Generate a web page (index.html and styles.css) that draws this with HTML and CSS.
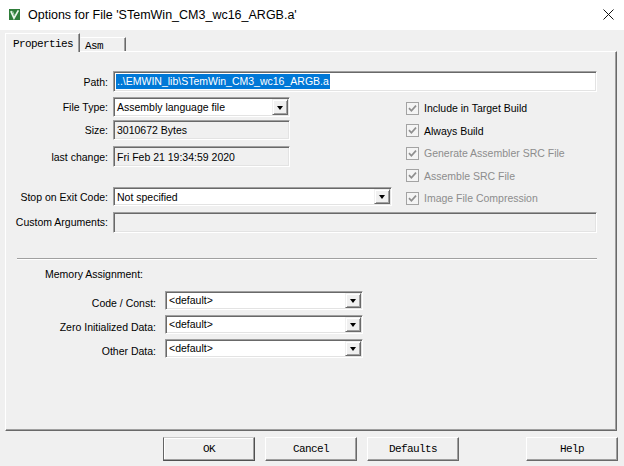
FILE: index.html
```html
<!DOCTYPE html>
<html>
<head>
<meta charset="utf-8">
<title>Options for File</title>
<link rel="stylesheet" href="styles.css">
</head>
<body>
<div class="window">
  <header class="titlebar">
    <svg class="app-icon" width="11" height="11" viewBox="0 0 11 11">
      <rect width="11" height="11" fill="#2f7d3a"/>
      <path d="M1.8 2.2 L5 9.2 L9.4 1.4" fill="none" stroke="#eaf6ea" stroke-width="1.7"/>
      <path d="M3.6 2.2 L5.4 6.4" fill="none" stroke="#9fd3a4" stroke-width="1"/>
    </svg>
    <span class="title">Options for File 'STemWin_CM3_wc16_ARGB.a'</span>
    <svg class="close" width="11" height="11" viewBox="0 0 11 11">
      <path d="M0.5 0.5 L10.5 10.5 M10.5 0.5 L0.5 10.5" stroke="#111" stroke-width="1"/>
    </svg>
  </header>

  <div class="dialog">
    <div class="tabs">
      <div class="tab active">Properties</div>
      <div class="tab">Asm</div>
    </div>

    <section class="panel">
      <div class="row path-row">
        <span class="lbl">Path:</span>
        <div class="edit wide"><span class="selected">..\EMWIN_lib\STemWin_CM3_wc16_ARGB.a</span></div>
      </div>

      <div class="mid">
        <div class="mid-left">
          <div class="row r-type">
            <span class="lbl">File Type:</span>
            <div class="combo w-short"><span class="val">Assembly language file</span><span class="drop"></span></div>
          </div>
          <div class="row r-size">
            <span class="lbl">Size:</span>
            <div class="edit ro w-short"><span class="val">3010672 Bytes</span></div>
          </div>
          <div class="row r-date">
            <span class="lbl">last change:</span>
            <div class="edit ro w-short"><span class="val">Fri Feb 21 19:34:59 2020</span></div>
          </div>
          <div class="row r-stop">
            <span class="lbl">Stop on Exit Code:</span>
            <div class="combo w-mid"><span class="val">Not specified</span><span class="drop"></span></div>
          </div>
        </div>

        <ul class="checks">
          <li class="check"><svg class="cb" width="13" height="13" viewBox="0 0 13 13"><rect x="0.5" y="0.5" width="12" height="12" fill="#f4f4f4" stroke="#a3a3a3"/><path d="M3 6.2 L5.4 8.8 L10 3.6" fill="none" stroke="#8e8e8e" stroke-width="1.7"/></svg><span>Include in Target Build</span></li>
          <li class="check"><svg class="cb" width="13" height="13" viewBox="0 0 13 13"><rect x="0.5" y="0.5" width="12" height="12" fill="#f4f4f4" stroke="#a3a3a3"/><path d="M3 6.2 L5.4 8.8 L10 3.6" fill="none" stroke="#8e8e8e" stroke-width="1.7"/></svg><span>Always Build</span></li>
          <li class="check off"><svg class="cb" width="13" height="13" viewBox="0 0 13 13"><rect x="0.5" y="0.5" width="12" height="12" fill="#f4f4f4" stroke="#a3a3a3"/><path d="M3 6.2 L5.4 8.8 L10 3.6" fill="none" stroke="#8e8e8e" stroke-width="1.7"/></svg><span>Generate Assembler SRC File</span></li>
          <li class="check off"><svg class="cb" width="13" height="13" viewBox="0 0 13 13"><rect x="0.5" y="0.5" width="12" height="12" fill="#f4f4f4" stroke="#a3a3a3"/><path d="M3 6.2 L5.4 8.8 L10 3.6" fill="none" stroke="#8e8e8e" stroke-width="1.7"/></svg><span>Assemble SRC File</span></li>
          <li class="check off"><svg class="cb" width="13" height="13" viewBox="0 0 13 13"><rect x="0.5" y="0.5" width="12" height="12" fill="#f4f4f4" stroke="#a3a3a3"/><path d="M3 6.2 L5.4 8.8 L10 3.6" fill="none" stroke="#8e8e8e" stroke-width="1.7"/></svg><span>Image File Compression</span></li>
        </ul>
      </div>

      <div class="row r-args">
        <span class="lbl">Custom Arguments:</span>
        <div class="edit ro wide"></div>
      </div>

      <div class="separator"></div>

      <div class="mem-title">Memory Assignment:</div>

      <div class="mem">
        <div class="row mem-row">
          <span class="mlbl">Code / Const:</span>
          <div class="combo w-mem"><span class="val">&lt;default&gt;</span><span class="drop"></span></div>
        </div>
        <div class="row mem-row">
          <span class="mlbl">Zero Initialized Data:</span>
          <div class="combo w-mem"><span class="val">&lt;default&gt;</span><span class="drop"></span></div>
        </div>
        <div class="row mem-row">
          <span class="mlbl">Other Data:</span>
          <div class="combo w-mem"><span class="val">&lt;default&gt;</span><span class="drop"></span></div>
        </div>
      </div>
    </section>

    <footer class="buttons">
      <button class="btn default">OK</button>
      <button class="btn">Cancel</button>
      <button class="btn">Defaults</button>
      <button class="btn help">Help</button>
    </footer>
  </div>
</div>
</body>
</html>
```

FILE: styles.css
```css
* { box-sizing: border-box; }

html, body {
  margin: 0;
  padding: 0;
}

body {
  width: 624px;
  height: 466px;
  overflow: hidden;
  background: #f0f0f0;
  font-family: "Liberation Sans", Arial, sans-serif;
  font-size: 10.5px;
  color: #000;
}

/* ---------- title bar ---------- */
.titlebar {
  height: 30px;
  background: #fff;
  display: flex;
  align-items: center;
  padding: 0 10px 1px 9px;
}

.app-icon {
  flex: none;
  margin-right: 8px;
}

.title {
  flex: 1;
  font-size: 12.5px;
  color: #000;
}

.close {
  flex: none;
}

/* ---------- dialog ---------- */
.dialog {
  padding-top: 3px;
}

.tabs {
  display: flex;
  align-items: flex-end;
  height: 19px;
  padding-left: 5px;
  position: relative;
  z-index: 1;
  margin-bottom: -1px;
}

.tab {
  font-family: "Liberation Mono", "Courier New", monospace;
  font-size: 11px;
  letter-spacing: -0.6px;
  line-height: 14px;
  color: #000;
  background: #f0f0f0;
  border-top: 1px solid #fff;
  border-left: 1px solid #fff;
  border-right: 1px solid #696969;
  box-shadow: inset -1px 0 0 #a0a0a0;
}

.tab.active {
  width: 75px;
  height: 19px;
  padding: 3px 0 0 7px;
}

.tab:not(.active) {
  width: 46px;
  height: 14px;
  margin-bottom: 1px;
  padding: 1px 0 0 4px;
  border-left: 1px solid #f0f0f0;
}

.panel {
  margin-left: 5px;
  width: 612px;
  height: 380px;
  border-top: 1px solid #fff;
  border-left: 1px solid #fff;
  border-right: 1px solid #696969;
  border-bottom: 1px solid #696969;
  box-shadow: inset -1px -1px 0 #a0a0a0;
}

/* ---------- rows & fields ---------- */
.row {
  display: flex;
  align-items: center;
}

.lbl {
  flex: none;
  width: 102px;
  margin-right: 5px;
  text-align: right;
  white-space: nowrap;
}

.edit,
.combo {
  flex: none;
  display: flex;
  align-items: center;
  border: 1px solid;
  border-color: #a0a0a0 #fff #fff #a0a0a0;
  box-shadow: inset 1px 1px 0 #696969, inset -1px -1px 0 #e3e3e3;
  background: #fff;
  padding-left: 3px;
  white-space: nowrap;
  overflow: hidden;
}

.edit.ro {
  background: #f0f0f0;
}

.wide { width: 484px; height: 21px; }
.w-short { width: 177px; }
.w-mid { width: 279px; }
.w-mem { width: 198px; height: 19px; }

.path-row {
  margin-top: 19px;
}

.path-row .edit {
  padding-left: 2px;
}

.selected {
  background: #0078d7;
  color: #fff;
  line-height: 15px;
  padding: 0 1px;
}

.val {
  flex: 1;
  line-height: 14px;
}

.combo .drop {
  flex: none;
  align-self: stretch;
  width: 16px;
  margin: 1px 1px 1px 0;
  background: #f0f0f0;
  border-top: 1px solid #f0f0f0;
  border-left: 1px solid #f0f0f0;
  border-right: 1px solid #696969;
  border-bottom: 1px solid #696969;
  box-shadow: inset 1px 1px 0 #fff, inset -1px -1px 0 #a0a0a0;
  display: flex;
  align-items: center;
  justify-content: center;
}

.combo .drop::after {
  content: "";
  width: 0;
  height: 0;
  border-left: 3.5px solid transparent;
  border-right: 3.5px solid transparent;
  border-top: 4px solid #000;
  margin-top: 1px;
}

/* ---------- middle block ---------- */
.mid {
  display: flex;
  margin-top: 3px;
}

.mid-left {
  flex: none;
  width: 399px;
  padding-top: 2px;
}

.r-type .combo { height: 20px; }
.r-size { margin-top: 3px; }
.r-size .edit { height: 20px; }
.r-date { margin-top: 6px; }
.r-date .edit { height: 21px; }
.r-stop { margin-top: 20px; }
.r-stop .combo { height: 19px; }

.checks {
  list-style: none;
  margin: 0;
  padding: 2px 0 0 0;
}

.check {
  display: flex;
  align-items: center;
  height: 22.5px;
  padding-left: 1px;
  white-space: nowrap;
}

.check .cb {
  flex: none;
  margin-right: 5px;
}

.check.off span {
  color: #8d8d8d;
}

.r-args {
  margin-top: 2px;
}

.separator {
  margin: 25px 0 0 11px;
  width: 580px;
  height: 2px;
  border-top: 1px solid #a0a0a0;
  border-bottom: 1px solid #fff;
}

.mem-title {
  margin: 8px 0 0 39px;
  line-height: 13px;
}

.mem {
  display: flex;
  flex-direction: column;
  gap: 5px;
  margin-top: 10px;
}

.mlbl {
  flex: none;
  width: 150px;
  margin-right: 9px;
  padding-top: 5px;
  text-align: right;
  white-space: nowrap;
}

/* ---------- buttons ---------- */
.buttons {
  display: flex;
  gap: 10px;
  margin-top: 6px;
  padding: 0 6px 0 163px;
}

.btn {
  width: 92px;
  height: 24px;
  padding: 0;
  margin: 0;
  font-family: "Liberation Mono", "Courier New", monospace;
  font-size: 11px;
  letter-spacing: -0.6px;
  color: #000;
  background: #f0f0f0;
  border: 1px solid;
  border-color: #fff #696969 #696969 #fff;
  box-shadow: inset -1px -1px 0 #a0a0a0;
}

.btn.default {
  border-color: #c8c8c8 #505050 #505050 #646464;
  box-shadow: inset -1px -1px 0 #a0a0a0, inset 1px 1px 0 #fff;
}

.btn.help {
  margin-left: auto;
}
```
